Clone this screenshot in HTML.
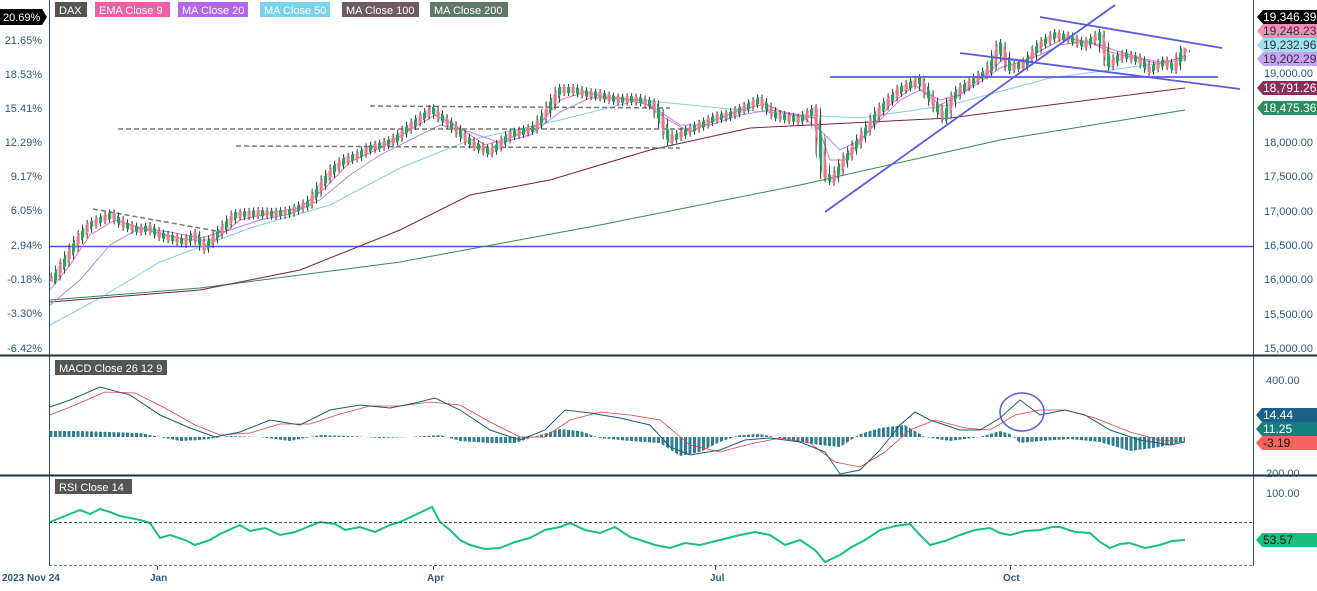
<!DOCTYPE html><html><head><meta charset="utf-8"><style>
body{margin:0;background:#fff;width:1317px;height:586px;overflow:hidden;font-family:"Liberation Sans",sans-serif}
svg text{font-family:"Liberation Sans",sans-serif;font-size:11px}
</style></head><body>
<svg width="1317" height="586" xmlns="http://www.w3.org/2000/svg">
<defs>
<pattern id="cand" width="9" height="600" patternUnits="userSpaceOnUse"><rect x="0" y="0" width="3.2" height="600" fill="#27a060"/><rect x="4.5" y="0" width="3.2" height="600" fill="#e8788a"/></pattern>
<pattern id="wick" width="4.5" height="600" patternUnits="userSpaceOnUse"><rect x="1.1" y="0" width="1" height="600" fill="#333"/></pattern>
<pattern id="hist" width="4.5" height="600" patternUnits="userSpaceOnUse"><rect x="0" y="0" width="3" height="600" fill="#2f8096"/></pattern>
</defs>
<rect width="1317" height="586" fill="#fff"/>
<line x1="49" y1="246.5" x2="1253" y2="246.5" stroke="#5050e0" stroke-width="1.5"/>
<polyline fill="none" stroke="#7fd0ea" points="50,325 100,298 160,262 250,228 330,205 400,168 470,140 560,120 640,100 720,108 800,115 860,118 950,105 1050,78 1185,60"/>
<polyline fill="none" stroke="#2e8b4e" points="50,300 200,288 400,262 600,225 800,185 1000,140 1185,110"/>
<polyline fill="none" stroke="#7a1f45" points="50,302 200,290 300,270 400,230 470,195 550,180 650,150 750,128 850,123 950,118 1050,105 1185,88"/>
<polyline fill="none" stroke="#c080f0" points="50,305 80,280 110,245 140,228 170,232 200,238 230,230 260,220 290,214 320,200 350,175 380,155 410,140 440,125 470,132 500,143 530,135 560,112 590,98 620,98 650,105 680,125 710,125 740,115 770,110 800,115 820,130 840,150 860,140 880,120 900,100 920,90 940,100 960,95 980,82 1000,68 1020,62 1040,55 1060,45 1080,42 1100,45 1120,52 1140,58 1160,62 1185,58"/>
<polyline fill="none" stroke="#f070b0" points="50,290 70,265 90,235 115,220 140,228 165,235 190,240 215,240 240,220 270,213 300,208 325,188 350,162 380,148 410,130 435,115 460,128 485,145 510,138 540,124 560,100 585,92 610,98 640,100 665,118 690,132 715,120 740,110 765,104 790,115 815,118 830,160 845,160 865,135 890,105 915,85 940,105 960,95 985,75 1005,58 1025,60 1045,48 1065,38 1090,42 1110,52 1135,58 1160,64 1185,56"/>
<g stroke="#777" stroke-width="1.5" stroke-dasharray="5,3">
<line x1="93" y1="209" x2="222" y2="232"/><line x1="370" y1="106" x2="670" y2="108"/><line x1="118" y1="129" x2="690" y2="129"/><line x1="236" y1="146" x2="680" y2="148"/></g>
<polyline fill="none" stroke="url(#wick)" stroke-width="12" stroke-linejoin="round" points="52,282 65,262 78,240 90,225 100,220 112,215 125,225 140,230 150,228 160,235 172,238 185,242 195,235 205,248 220,232 235,215 248,214 260,213 275,214 290,212 310,203 325,180 335,168 345,160 358,156 370,148 383,145 395,140 412,125 432,110 445,120 455,128 465,138 475,145 490,152 500,145 510,135 522,132 535,128 545,115 560,90 575,90 588,94 600,95 610,98 620,100 630,99 640,100 655,105 670,140 680,135 690,130 702,125 715,118 730,115 745,108 760,100 768,108 775,115 788,118 800,120 815,110 825,175 833,180 845,160 860,140 870,125 880,110 890,100 900,90 910,85 920,80 935,105 945,118 952,100 960,90 975,80 990,70 1000,45 1010,68 1018,66 1025,65 1040,45 1055,35 1070,38 1085,45 1100,35 1110,65 1118,58 1125,55 1140,60 1150,70 1165,62 1175,68 1185,48"/>
<polyline fill="none" stroke="url(#cand)" stroke-width="6" stroke-linejoin="round" points="52,282 65,262 78,240 90,225 100,220 112,215 125,225 140,230 150,228 160,235 172,238 185,242 195,235 205,248 220,232 235,215 248,214 260,213 275,214 290,212 310,203 325,180 335,168 345,160 358,156 370,148 383,145 395,140 412,125 432,110 445,120 455,128 465,138 475,145 490,152 500,145 510,135 522,132 535,128 545,115 560,90 575,90 588,94 600,95 610,98 620,100 630,99 640,100 655,105 670,140 680,135 690,130 702,125 715,118 730,115 745,108 760,100 768,108 775,115 788,118 800,120 815,110 825,175 833,180 845,160 860,140 870,125 880,110 890,100 900,90 910,85 920,80 935,105 945,118 952,100 960,90 975,80 990,70 1000,45 1010,68 1018,66 1025,65 1040,45 1055,35 1070,38 1085,45 1100,35 1110,65 1118,58 1125,55 1140,60 1150,70 1165,62 1175,68 1185,48"/>
<g stroke="#5a5ae6" stroke-width="1.8">
<line x1="825" y1="212" x2="1115" y2="5"/><line x1="830" y1="77" x2="1218" y2="77"/><line x1="960" y1="53" x2="1240" y2="89"/><line x1="1040" y1="17" x2="1222" y2="48"/></g>
<polygon fill="url(#hist)" points="50,437 50,431 80,431 110,432 140,433 160,437 180,441 200,440 230,436 260,437 290,441 320,435 350,436 380,438 410,437 440,435 460,441 490,443 515,443 540,435 560,429 580,431 600,438 630,441 660,443 680,456 700,452 720,442 740,435 760,434 790,440 820,445 840,447 860,434 880,428 905,425 925,437 950,441 980,437 1000,431 1010,434 1020,443 1040,441 1070,439 1100,442 1130,451 1160,447 1185,441 1185,437"/>
<polyline fill="none" stroke="#e04040" stroke-width="0.8" points="50,415 75,405 105,392 135,393 165,408 195,425 220,435 250,433 280,424 310,424 340,414 370,406 400,406 430,402 460,405 490,422 520,437 545,437 570,420 600,412 630,415 660,420 690,445 720,452 750,444 780,438 810,443 835,462 860,467 885,452 910,430 935,420 965,428 990,430 1015,415 1040,410 1065,410 1095,418 1130,432 1160,440 1185,442"/>
<polyline fill="none" stroke="#1f5a78" points="50,407 70,400 100,387 130,395 160,415 190,428 215,437 240,432 270,420 300,425 330,410 360,405 390,408 415,403 435,398 460,410 490,430 520,440 545,430 565,410 590,413 620,418 650,425 670,447 690,455 720,450 745,440 770,438 800,442 825,452 840,474 860,470 880,450 900,425 915,412 930,420 960,430 980,430 1000,418 1020,400 1040,415 1065,410 1085,415 1110,430 1140,440 1170,445 1185,442"/>
<ellipse cx="1022" cy="412" rx="22" ry="19" fill="none" stroke="#5a5ae6" stroke-width="1.5"/>
<polyline fill="none" stroke="#18c07e" stroke-width="2" points="50,522 60,518 70,514 80,510 90,514 100,509 110,512 120,516 130,518 140,520 150,523 160,538 170,535 185,540 195,545 210,540 220,534 240,525 250,531 265,528 280,535 295,532 305,528 320,522 335,524 345,530 360,527 375,532 390,525 400,522 415,515 432,507 440,522 450,530 460,540 470,545 485,549 500,548 515,542 530,538 545,530 560,527 570,523 585,530 600,533 615,527 630,537 640,540 655,545 670,548 685,543 700,545 720,540 740,535 755,532 770,535 785,545 800,540 815,550 825,562 840,555 850,548 865,540 880,530 895,526 910,524 920,535 930,545 945,541 960,535 975,530 990,528 1000,533 1010,535 1025,531 1040,530 1052,527 1060,527 1075,532 1090,533 1100,542 1110,548 1120,544 1130,543 1145,548 1160,545 1172,541 1185,540"/>
<line x1="49.5" y1="0" x2="49.5" y2="566" stroke="#2d5566"/>
<line x1="1253.5" y1="0" x2="1253.5" y2="566" stroke="#2d5566"/>
<line x1="0" y1="355.5" x2="1317" y2="355.5" stroke="#1d2f38" stroke-width="2"/>
<line x1="0" y1="475.5" x2="1317" y2="475.5" stroke="#1d2f38" stroke-width="2"/>
<line x1="49" y1="565.5" x2="1253" y2="565.5" stroke="#8a6d7a" stroke-dasharray="3,2"/>
<line x1="49" y1="522.5" x2="1253" y2="522.5" stroke="#355" stroke-dasharray="3,2"/>
<rect x="55" y="2" width="32" height="15" fill="#555"/><text x="59" y="14" fill="#fff">DAX</text>
<rect x="95" y="2" width="75" height="15" fill="#f35fa6"/><text x="99" y="14" fill="#fff">EMA Close 9</text>
<rect x="178" y="2" width="70" height="15" fill="#b365ef"/><text x="182" y="14" fill="#fff">MA Close 20</text>
<rect x="260" y="2" width="70" height="15" fill="#79d3ec"/><text x="264" y="14" fill="#fff">MA Close 50</text>
<rect x="342" y="2" width="77" height="15" fill="#6f5a62"/><text x="346" y="14" fill="#fff">MA Close 100</text>
<rect x="430" y="2" width="78" height="15" fill="#60786c"/><text x="434" y="14" fill="#fff">MA Close 200</text>
<rect x="55" y="360" width="112" height="15" fill="#555"/><text x="59" y="372" fill="#fff">MACD Close 26 12 9</text>
<rect x="55" y="479" width="77" height="15" fill="#555"/><text x="59" y="491" fill="#fff">RSI Close 14</text>
<path d="M0 9h42l5 8-5 8H0z" fill="#000"/><text x="3" y="21" fill="#fff">20.69%</text>
<g fill="#2a5b78" text-anchor="end">
<text x="42" y="44">21.65%</text><text x="42" y="78">18.53%</text><text x="42" y="112">15.41%</text><text x="42" y="146">12.29%</text><text x="42" y="180">9.17%</text><text x="42" y="214">6.05%</text><text x="42" y="249">2.94%</text><text x="42" y="283">-0.18%</text><text x="42" y="317">-3.30%</text><text x="42" y="352">-6.42%</text>
</g>
<g fill="#2a5b78">
<text x="1264" y="77">19,000.00</text><text x="1264" y="146">18,000.00</text><text x="1264" y="180">17,500.00</text><text x="1264" y="215">17,000.00</text><text x="1264" y="249">16,500.00</text><text x="1264" y="283">16,000.00</text><text x="1264" y="318">15,500.00</text><text x="1264" y="352">15,000.00</text>
<text x="1266" y="384">400.00</text><text x="1266" y="477">200.00</text><text x="1266" y="497">100.00</text>
</g>
<path d="M1263 10h54v14h-54l-6-7z" fill="#000"/><text x="1263" y="21" fill="#fff" style="font-size:12px">19,346.39</text>
<path d="M1263 24h54v14h-54l-6-7z" fill="#f78bb8"/><text x="1263" y="35" fill="#333" style="font-size:12px">19,248.23</text>
<path d="M1263 38h54v14h-54l-6-7z" fill="#9ee0f2"/><text x="1263" y="49" fill="#333" style="font-size:12px">19,232.96</text>
<path d="M1263 52h54v14h-54l-6-7z" fill="#c7a2f5"/><text x="1263" y="63" fill="#333" style="font-size:12px">19,202.29</text>
<path d="M1263 81h54v14h-54l-6-7z" fill="#8c2d5a"/><text x="1263" y="92" fill="#fff" style="font-size:12px">18,791.26</text>
<path d="M1263 101h54v14h-54l-6-7z" fill="#2e8b5e"/><text x="1263" y="112" fill="#fff" style="font-size:12px">18,475.36</text>
<path d="M1262 408h55v14h-55l-6-7z" fill="#1c6188"/><text x="1263" y="419" fill="#fff" style="font-size:12px">14.44</text>
<path d="M1262 422h55v14h-55l-6-7z" fill="#14807d"/><text x="1263" y="433" fill="#fff" style="font-size:12px">11.25</text>
<path d="M1262 436h55v14h-55l-6-7z" fill="#f6635e"/><text x="1263" y="447" fill="#111" style="font-size:12px">-3.19</text>
<path d="M1262 533h55v14h-55l-6-7z" fill="#18c07e"/><text x="1263" y="544" fill="#111" style="font-size:12px">53.57</text>
<g fill="#2a5b78"><text x="2" y="581" style="font-size:10px;font-weight:bold">2023 Nov 24</text><text x="150" y="581" style="font-size:10px;font-weight:bold">Jan</text><text x="427" y="581" style="font-size:10px;font-weight:bold">Apr</text><text x="710" y="581" style="font-size:10px;font-weight:bold">Jul</text><text x="1003" y="581" style="font-size:10px;font-weight:bold">Oct</text></g>
<g stroke="#2a5b78"><line x1="157.5" y1="566" x2="157.5" y2="570"/><line x1="433.5" y1="566" x2="433.5" y2="570"/><line x1="715.5" y1="566" x2="715.5" y2="570"/><line x1="1010.5" y1="566" x2="1010.5" y2="570"/></g>
</svg>
</body></html>
